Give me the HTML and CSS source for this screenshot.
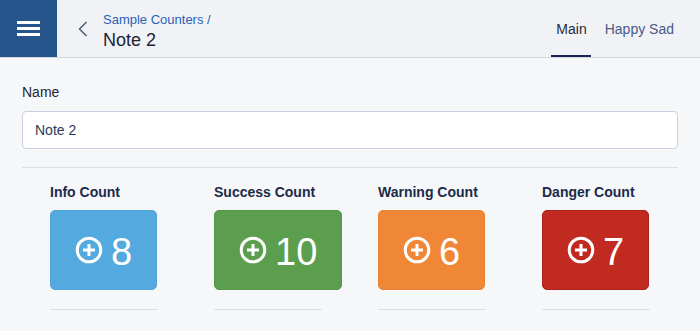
FILE: index.html
```html
<!DOCTYPE html>
<html>
	<head>
		<meta charset="utf-8" />
		<title>Note 2</title>
		<link rel="stylesheet" href="styles.css">
	</head>
	<body>
		<div class="app-header">
			<a class="app-menu" href="#">
				<span></span><span></span><span></span>
			</a>
			<a class="app-back" href="#">
				<svg width="10" height="16" viewBox="0 0 10 16"><polyline points="8.5,1 1.5,8 8.5,15" fill="none" stroke="#4b566f" stroke-width="1.4"/></svg>
			</a>
			<div class="app-title">
				<div class="app-crumb"><a href="#">Sample Counters</a> /</div>
				<div class="app-name">Note 2</div>
			</div>
			<div class="app-tabs">
				<a class="app-tab app-tab-active" href="#">Main</a>
				<a class="app-tab" href="#">Happy Sad</a>
			</div>
		</div>

		<div class="app-content">
			<label class="field-label">Name</label>
			<input class="field-input" type="text" value="Note 2" />
			<div class="divider"></div>

			<div class="counters">
				<div class="counter">
					<div class="counter-label">Info Count</div>
					<a class="counter-btn counter-info" href="#">
						<svg width="28" height="28" viewBox="0 0 28 28"><circle cx="14" cy="14" r="11.8" fill="none" stroke="#fff" stroke-width="3"/><path d="M14 8v12M8 14h12" stroke="#fff" stroke-width="3"/></svg>
						<span>8</span>
					</a>
					<div class="counter-line"></div>
				</div>
				<div class="counter">
					<div class="counter-label">Success Count</div>
					<a class="counter-btn counter-success" href="#">
						<svg width="28" height="28" viewBox="0 0 28 28"><circle cx="14" cy="14" r="11.8" fill="none" stroke="#fff" stroke-width="3"/><path d="M14 8v12M8 14h12" stroke="#fff" stroke-width="3"/></svg>
						<span>10</span>
					</a>
					<div class="counter-line"></div>
				</div>
				<div class="counter">
					<div class="counter-label">Warning Count</div>
					<a class="counter-btn counter-warning" href="#">
						<svg width="28" height="28" viewBox="0 0 28 28"><circle cx="14" cy="14" r="11.8" fill="none" stroke="#fff" stroke-width="3"/><path d="M14 8v12M8 14h12" stroke="#fff" stroke-width="3"/></svg>
						<span>6</span>
					</a>
					<div class="counter-line"></div>
				</div>
				<div class="counter">
					<div class="counter-label">Danger Count</div>
					<a class="counter-btn counter-danger" href="#">
						<svg width="28" height="28" viewBox="0 0 28 28"><circle cx="14" cy="14" r="11.8" fill="none" stroke="#fff" stroke-width="3"/><path d="M14 8v12M8 14h12" stroke="#fff" stroke-width="3"/></svg>
						<span>7</span>
					</a>
					<div class="counter-line"></div>
				</div>
			</div>
		</div>
	</body>
</html>
```

FILE: styles.css
```css
body{margin: 0px;padding: 0px;background: #f6f7f9;font-family: "Liberation Sans", Arial, sans-serif;font-size: 14px;color: #1c2233;}
a{text-decoration: none;}

.app-header{
	display: flex;height: 57px;
	background: #f0f2f6;border-bottom: 1px solid #d3d7e2;
}
.app-menu{
	width: 57px;height: 57px;background: #26558c;
	display: flex;flex-direction: column;justify-content: center;align-items: center;gap: 3px;
}
.app-menu span{
	display: block;width: 23px;height: 3px;background: #fff;
}
.app-back{
	display: flex;align-items: center;
	padding: 0px 15px 0px 21px;
}
.app-title{padding-top: 12px;}
.app-crumb{font-size: 13px;line-height: 16px;color: #2d5fb5;}
.app-crumb a{color: #2d5fb5;}
.app-name{font-size: 18px;line-height: 24px;color: #1c2233;}

.app-tabs{
	margin-left: auto;padding-right: 22px;
	display: flex;gap: 9px;
}
.app-tab{
	display: flex;align-items: center;
	padding: 0px 4px 0px 5px;margin-top: 2px;
	font-size: 14px;color: #4a5b85;
	border-bottom: 2px solid transparent;
}
.app-tab-active{color: #262b3c;border-bottom-color: #1b2452;}

.app-content{padding: 24px 22px;}
.field-label{display: block;line-height: 20px;margin-bottom: 9px;color: #1f2533;}
.field-input{
	display: block;box-sizing: border-box;width: 100%;height: 38px;
	margin: 0px;padding: 0px 12px;
	border: 1px solid #c9cfdf;border-radius: 4px;background: #fff;
	font-family: inherit;font-size: 14px;color: #2c3a5a;
	outline: none;
}
.divider{height: 1px;background: #dde0e8;margin-top: 18px;}

.counters{
	display: grid;grid-template-columns: repeat(4, minmax(0, 1fr));
	margin-top: 14px;
}
.counter{padding: 0px 28px;}
.counter-label{font-weight: bold;line-height: 20px;color: #1c2a4a;white-space: nowrap;}
.counter-btn{
	display: inline-flex;align-items: center;gap: 8px;
	height: 80px;box-sizing: border-box;margin-top: 8px;
	padding: 0px 24px;border-radius: 5px;border: 1px solid transparent;
	color: #fff;font-size: 38px;white-space: nowrap;
}
.counter-btn svg{display: block;}
.counter-btn span{line-height: 1;margin-top: 4px;}
.counter-info{background: #54a9de;border-color: #4fa3d8;}
.counter-success{background: #5b9e4e;border-color: #55984a;}
.counter-warning{background: #ef8737;border-color: #ea8131;}
.counter-danger{background: #c12a20;border-color: #a9231b;}
.counter-line{height: 1px;background: #dcdfe6;margin-top: 19px;}
```
